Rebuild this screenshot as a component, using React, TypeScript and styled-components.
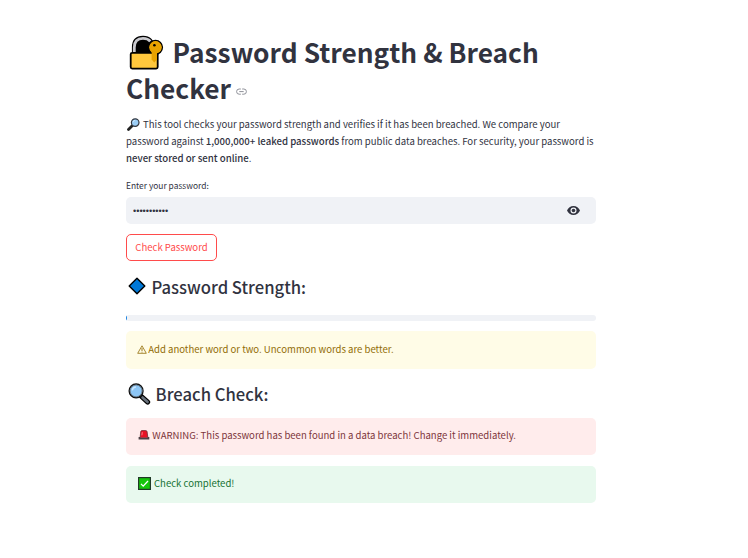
import React from 'react';
import styled, { createGlobalStyle } from 'styled-components';

const GlobalStyle = createGlobalStyle`
  * { box-sizing: border-box; }
  body {
    margin: 0;
    background: #fff;
    color: #31333f;
    font-family: "Noto Sans CJK SC", "Noto Sans", sans-serif;
    font-size: 9.57px;
    line-height: 17px;
  }
`;

const Page = styled.main`
  width: 470px;
  margin-left: 126px;
  padding-top: 34px;
`;

const Title = styled.h1`
  margin: 0;
  font-size: 26.3px;
  font-weight: 700;
  line-height: 36px;
`;

const TitleLine = styled.span`
  display: flex;
  align-items: flex-start;
  height: 36px;
  white-space: nowrap;
`;

const Icon = styled.svg<{ $w: number; $h: number; $top?: number; $left?: number; $gap?: number }>`
  display: block;
  flex: none;
  width: ${(p) => p.$w}px;
  height: ${(p) => p.$h}px;
  margin: ${(p) => `${p.$top ?? 0}px ${p.$gap ?? 0}px 0 ${p.$left ?? 0}px`};
`;

const Intro = styled.p`
  margin: 10px 0 0;
`;

const IntroLine = styled.span`
  display: flex;
  height: 17px;
  white-space: pre;
`;

const Strong = styled.strong`
  font-size: 9.64px;
  font-weight: 500;
`;

const Label = styled.label`
  display: block;
  height: 17px;
  margin-top: 10px;
  font-size: 8.42px;
`;

const Field = styled.div`
  display: flex;
  align-items: center;
  height: 27px;
  margin-top: 3px;
  padding: 0 16px 0 7px;
  border-radius: 5px;
  background: #f0f2f6;
`;

const PasswordInput = styled.input`
  flex: 1;
  min-width: 0;
  padding: 0;
  border: 0;
  outline: 0;
  background: transparent;
  color: #31333f;
  font-family: "Liberation Sans", Arial, sans-serif;
  font-size: 9.14px;
`;

const EyeButton = styled.button`
  display: flex;
  padding: 0;
  border: 0;
  background: transparent;
`;

const CheckButton = styled.button`
  display: block;
  width: 91px;
  height: 27px;
  margin-top: 10px;
  padding: 0;
  border: 1px solid #ff4b4b;
  border-radius: 5px;
  background: #fff;
  color: #ff4b4b;
  font: inherit;
`;

const Heading = styled.h3<{ $top: number }>`
  display: flex;
  height: 22px;
  margin: ${(p) => p.$top}px 0 0;
  font-size: 16.65px;
  font-weight: 500;
  line-height: 22px;
  white-space: nowrap;
`;

const Track = styled.div`
  height: 6px;
  margin: 17px 0 10px;
  overflow: hidden;
  border-radius: 3px;
  background: #f0f2f6;
`;

const Fill = styled.div`
  width: 1px;
  height: 100%;
  background: #1c83e1;
`;

const tones = {
  warning: { bg: '#fffce7', fg: '#926c05' },
  error: { bg: '#ffecec', fg: '#7d353b' },
  success: { bg: '#e8f9ee', fg: '#177233' },
};

const Alert = styled.div<{ $tone: keyof typeof tones; $h?: number; $top?: number }>`
  display: flex;
  height: ${(p) => p.$h ?? 37}px;
  margin-top: ${(p) => p.$top ?? 0}px;
  padding: ${(p) => (p.$h ? 10 : 9)}px 11px 0;
  border-radius: 5px;
  background: ${(p) => tones[p.$tone].bg};
  color: ${(p) => tones[p.$tone].fg};
  white-space: nowrap;
`;

function LockIcon() {
  return (
    <Icon $w={36} $h={36} $top={1} $left={2} $gap={8.6} viewBox="0 0 36 36">
      <path d="M4.600 19V12.500Q4.600 1.500 15 1.500T25.500 12.500V19z" fill="#000" stroke="#000" strokeWidth="1.400" />
      <path d="M6.300 18V12.500Q6.300 3.400 15 3.400q5 0 7.300 3" fill="none" stroke="#c9c9ce" strokeWidth="2.800" />
      <rect x="2.700" y="17.800" width="27" height="15.800" rx="1.500" fill="#ffc83d" stroke="#000" strokeWidth="1.800" />
      <circle cx="27.500" cy="12.300" r="6.800" fill="#e8a200" stroke="#000" strokeWidth="1.600" />
      <path d="M23.600 16v8.500l2.700 3 2.700-3V16z" fill="#e8a200" />
      <circle cx="27.500" cy="12.300" r="6.200" fill="#e8a200" />
      <circle cx="26.400" cy="10.300" r="1.300" fill="#000" />
    </Icon>
  );
}

function LinkIcon() {
  return (
    <Icon $w={11} $h={8} $top={18} $left={5} viewBox="0 0 11 8" fill="none" stroke="#8e9098" strokeWidth="1">
      <path d="M4.800 1H3.200a2.600 2.600 0 0 0 0 5.200h1.600M6.200 1h1.600a2.600 2.600 0 0 1 0 5.200H6.200M3.300 3.600h4.400" />
    </Icon>
  );
}

function SmallMagnifier() {
  return (
    <Icon $w={13} $h={13} $top={2} $left={1} $gap={3} viewBox="0 0 13 13">
      <path d="m5.200 7.800-3.700 3.700" stroke="#222" strokeWidth="2.800" strokeLinecap="round" />
      <circle cx="8.200" cy="4.600" r="3.800" fill="#9bcdf5" stroke="#343840" strokeWidth="1.200" />
      <path d="M6.100 4a2.200 2.200 0 0 1 2-1.600" fill="none" stroke="#d9efff" strokeWidth=".8" />
    </Icon>
  );
}

function EyeIcon() {
  return (
    <Icon $w={13} $h={9} viewBox="0 0 13 9">
      <path fillRule="evenodd" fill="#31333f" d="M6.500 0C3.600 0 1.100 1.800 0 4.500 1.100 7.200 3.600 9 6.500 9S11.900 7.200 13 4.500C11.900 1.800 9.400 0 6.500 0Zm0 7.500a3 3 0 1 1 0-6 3 3 0 0 1 0 6Z" />
      <circle cx="6.500" cy="4.500" r="1.800" fill="#31333f" />
    </Icon>
  );
}

function DiamondIcon() {
  return (
    <Icon $w={18} $h={18} $top={1} $left={2} $gap={5.5} viewBox="0 0 18 18">
      <path d="m9 1.200 7.800 7.800L9 16.800 1.200 9z" fill="#0078d7" stroke="#000" strokeWidth="1.400" strokeLinejoin="round" />
    </Icon>
  );
}

function WarningIcon() {
  return (
    <Icon $w={10} $h={9} $top={4} $gap={1.2} viewBox="0 0 10 9" fill="none" stroke="#926c05">
      <path d="M5 .8 9.300 8.300H.7Z" strokeWidth=".8" strokeLinejoin="round" />
      <path d="M5 3v3M5 6.700v.8" strokeWidth=".9" />
    </Icon>
  );
}

function LargeMagnifier() {
  return (
    <Icon $w={23} $h={23} $top={0} $left={2} $gap={4.6} viewBox="0 0 23 23">
      <path d="m13.500 13.500 6.200 5.600" stroke="#000" strokeWidth="5" strokeLinecap="round" />
      <path d="m14.500 14.500 5.100 4.500" stroke="#68717c" strokeWidth="2.600" strokeLinecap="round" />
      <circle cx="8.100" cy="7.900" r="6.900" fill="#8dc6f5" stroke="#111" strokeWidth="1.400" />
      <circle cx="8.100" cy="7.900" r="5.900" fill="none" stroke="#687682" strokeWidth=".9" />
      <path d="M4.300 7.300a4 4 0 0 1 3.600-3.300" fill="none" stroke="#c9e7ff" strokeWidth="1.300" />
    </Icon>
  );
}

function SirenIcon() {
  return (
    <Icon $w={12} $h={10} $top={3} $left={1} $gap={2.3} viewBox="0 0 12 10">
      <path d="M2.100 7.800 2.700 1.800Q2.900.6 4 .6h3.700Q8.800.6 9.100 1.800l.8 6z" fill="#e81224" stroke="#6a3036" strokeWidth=".8" />
      <path d="M4.300 2.200 3.900 5.300" stroke="#ff7b83" strokeWidth="1" />
      <path d="M.6 7h1.600v1h7.600V7h1.500v2.400H.6z" fill="#4b4145" />
    </Icon>
  );
}

function CheckIcon() {
  return (
    <Icon $w={13} $h={13} $top={2} $left={1} $gap={3} viewBox="0 0 13 13">
      <rect x=".6" y=".6" width="11.800" height="11.800" fill="#16c60c" stroke="#203a27" strokeWidth="1.200" />
      <path d="m3 6.900 2.200 2.200L10 4" fill="none" stroke="#fff" strokeWidth="1.300" />
    </Icon>
  );
}

export default function App() {
  return (
    <>
      <GlobalStyle />
      <Page>
        <Title>
          <TitleLine><LockIcon />Password Strength &amp; Breach</TitleLine>
          <TitleLine>Checker<LinkIcon /></TitleLine>
        </Title>
        <Intro>
          <IntroLine><SmallMagnifier />This tool checks your password strength and verifies if it has been breached. We compare your</IntroLine>
          <IntroLine>password against <Strong>1,000,000+ leaked passwords</Strong> from public data breaches. For security, your password is</IntroLine>
          <IntroLine><Strong>never stored or sent online</Strong>.</IntroLine>
        </Intro>
        <Label htmlFor="password">Enter your password:</Label>
        <Field>
          <PasswordInput id="password" type="password" defaultValue="password123" />
          <EyeButton type="button" aria-label="Show password"><EyeIcon /></EyeButton>
        </Field>
        <CheckButton type="button">Check Password</CheckButton>
        <Heading $top={15}><DiamondIcon />Password Strength:</Heading>
        <Track><Fill /></Track>
        <Alert $tone="warning" $h={38}><WarningIcon />Add another word or two. Uncommon words are better.</Alert>
        <Heading $top={14}><LargeMagnifier />Breach Check:</Heading>
        <Alert $tone="error" $top={13}><SirenIcon />WARNING: This password has been found in a data breach! Change it immediately.</Alert>
        <Alert $tone="success" $top={11}><CheckIcon />Check completed!</Alert>
      </Page>
    </>
  );
}
